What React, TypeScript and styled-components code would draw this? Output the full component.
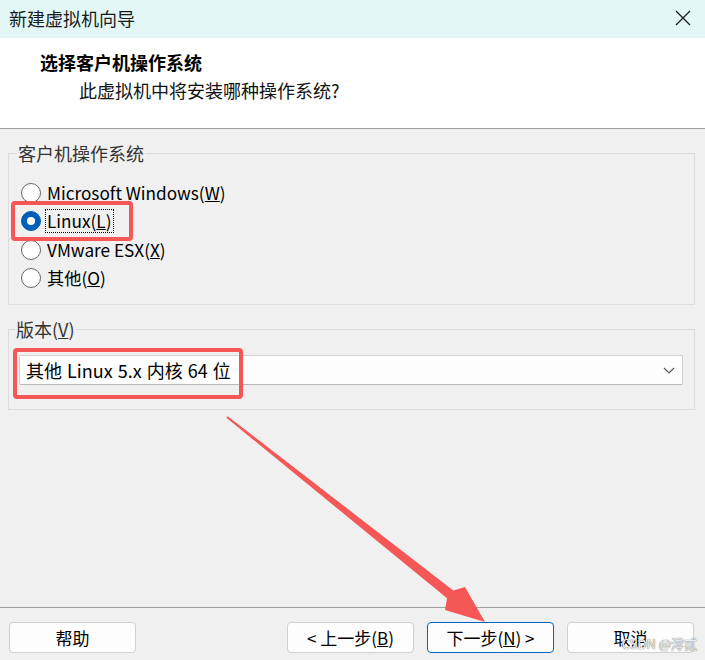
import React from 'react';
import styled, { createGlobalStyle } from 'styled-components';

const GlobalStyle = createGlobalStyle`
  html, body {
    margin: 0;
    padding: 0;
    background: #f0f0f0;
  }
  * {
    box-sizing: border-box;
  }
`;

const FONT = `"Noto Sans CJK SC", "Noto Sans", sans-serif`;
const RED = '#f55656';

interface OsOption {
  id: string;
  label: string;
  key: string;
  suffix: string;
}

const osOptions: OsOption[] = [
  { id: 'windows', label: 'Microsoft Windows(', key: 'W', suffix: ')' },
  { id: 'linux', label: 'Linux(', key: 'L', suffix: ')' },
  { id: 'esx', label: 'VMware ESX(', key: 'X', suffix: ')' },
  { id: 'other', label: '其他(', key: 'O', suffix: ')' },
];

const CloseIcon = () => (
  <svg width="16" height="16" viewBox="0 0 16 16">
    <path d="M1 1 L15 15 M15 1 L1 15" stroke="#1a1a1a" strokeWidth="1.3" fill="none" />
  </svg>
);

const Chevron = () => (
  <svg width="12" height="7" viewBox="0 0 12 7">
    <polyline points="1,1 6,6 11,1" stroke="#555" strokeWidth="1.1" fill="none" />
  </svg>
);

const App = () => {
  const selected = 'linux';

  return (
    <>
      <GlobalStyle />
      <Wizard>
        <TitleBar>
          <span>新建虚拟机向导</span>
          <CloseButton>
            <CloseIcon />
          </CloseButton>
        </TitleBar>

        <Header>
          <Heading>选择客户机操作系统</Heading>
          <SubHeading>此虚拟机中将安装哪种操作系统?</SubHeading>
        </Header>

        <Body>
          <Group>
            <Legend>客户机操作系统</Legend>
            <RadioList>
              {osOptions.map((opt) => (
                <RadioRow key={opt.id}>
                  <RadioDot checked={opt.id === selected} />
                  <RadioLabel focused={opt.id === selected}>
                    {opt.label}
                    <u>{opt.key}</u>
                    {opt.suffix}
                  </RadioLabel>
                </RadioRow>
              ))}
            </RadioList>
          </Group>

          <Group compact>
            <Legend>
              版本(<u>V</u>)
            </Legend>
            <Select>
              <span>其他 Linux 5.x 内核 64 位</span>
              <Chevron />
            </Select>
          </Group>
        </Body>

        <Footer>
          <Button>帮助</Button>
          <ButtonGroup>
            <Button>
              &lt; 上一步(<u>B</u>)
            </Button>
            <Button primary>
              下一步(<u>N</u>) &gt;
            </Button>
            <Button>取消</Button>
          </ButtonGroup>
        </Footer>

        <Highlight style={{ left: 11, top: 201, width: 122, height: 40 }} />
        <Highlight style={{ left: 13, top: 348, width: 230, height: 51 }} />

        <ArrowLayer width="705" height="660" viewBox="0 0 705 660">
          <polygon
            points="226.4,417.8 447.1,598.2 445,610 485,622 465,587 453.3,590.4 227.6,416.2"
            fill={RED}
          />
        </ArrowLayer>

        <Watermark>CSDN @澪贰</Watermark>
      </Wizard>
    </>
  );
};

export default App;

const Wizard = styled.div`
  position: relative;
  width: 705px;
  height: 660px;
  overflow: hidden;
  display: flex;
  flex-direction: column;
  background: #f0f0f0;
  font-family: ${FONT};
  font-size: 17px;
  color: #000;
`;

const TitleBar = styled.div`
  height: 38px;
  flex-shrink: 0;
  display: flex;
  align-items: center;
  justify-content: space-between;
  padding: 0 14px 3px 9px;
  background: #e4f7f7;
  font-size: 18px;
  color: #1a1a1a;
`;

const CloseButton = styled.div`
  display: flex;
  align-items: center;
`;

const Header = styled.div`
  height: 91px;
  flex-shrink: 0;
  background: #fff;
  border-bottom: 1px solid #a0a0a0;
  padding-top: 12px;
`;

const Heading = styled.div`
  padding-left: 40px;
  font-size: 18px;
  font-weight: 700;
  line-height: 24px;
  color: #000;
`;

const SubHeading = styled.div`
  margin-top: 4px;
  padding-left: 79px;
  font-size: 18px;
  line-height: 24px;
  color: #111;
`;

const Body = styled.div`
  flex: 1;
  display: flex;
  flex-direction: column;
  gap: 14px;
  padding: 14px 10px 0 8px;
`;

const Group = styled.fieldset<{ compact?: boolean }>`
  margin: 0;
  min-width: 0;
  border: 1px solid #dcdcdc;
  padding: ${(p) => (p.compact ? '16px 11px 24px 10px' : '16px 0 12px 12px')};
`;

const Legend = styled.legend`
  margin-left: -4px;
  padding: 0 1px;
  font-size: 18px;
  line-height: 20px;
  color: #333;
`;

const RadioList = styled.div`
  display: flex;
  flex-direction: column;
`;

const RadioRow = styled.div`
  height: 28.3px;
  display: flex;
  align-items: center;
  gap: 5px;
`;

const RadioDot = styled.span<{ checked?: boolean }>`
  width: 20px;
  height: 20px;
  flex-shrink: 0;
  border-radius: 50%;
  background: ${(p) => (p.checked ? '#005fb8' : '#fff')};
  border: 1px solid ${(p) => (p.checked ? '#005fb8' : '#666')};
  display: flex;
  align-items: center;
  justify-content: center;
  &::after {
    content: '';
    display: ${(p) => (p.checked ? 'block' : 'none')};
    width: 8px;
    height: 8px;
    border-radius: 50%;
    background: #fff;
  }
`;

const RadioLabel = styled.span<{ focused?: boolean }>`
  font-size: 17.2px;
  line-height: 22px;
  padding: 0 1px;
  outline: ${(p) => (p.focused ? '1px dotted #000' : 'none')};
  color: #000;
`;

const Select = styled.div`
  height: 30px;
  display: flex;
  align-items: center;
  justify-content: space-between;
  padding: 0 7px 0 6px;
  background: #fdfdfd;
  border: 1px solid #cfd2d4;
  border-bottom-color: #b8bbbd;
  border-radius: 2px;
  font-size: 18px;
  word-spacing: 1px;
  color: #000;
`;

const Footer = styled.div`
  height: 53px;
  flex-shrink: 0;
  border-top: 1px solid #a0a0a0;
  display: flex;
  justify-content: space-between;
  align-items: flex-start;
  padding: 14px 11px 0 9px;
`;

const ButtonGroup = styled.div`
  display: flex;
  gap: 13px;
`;

const Button = styled.button<{ primary?: boolean }>`
  width: 127px;
  height: 31px;
  padding: 0;
  border-radius: 4px;
  background: #fdfdfd;
  border: 1px solid ${(p) => (p.primary ? '#0067c0' : '#d0d0d0')};
  font-family: ${FONT};
  font-size: 17px;
  color: #000;
  display: flex;
  align-items: center;
  justify-content: center;
`;

const Highlight = styled.div`
  position: absolute;
  border: 4px solid ${RED};
  border-radius: 4px;
  pointer-events: none;
`;

const ArrowLayer = styled.svg`
  position: absolute;
  left: 0;
  top: 0;
  pointer-events: none;
`;

const Watermark = styled.div`
  position: absolute;
  right: 8px;
  bottom: 7px;
  font-family: ${FONT};
  font-size: 13px;
  color: rgba(255, 255, 255, 0.9);
  text-shadow: 0 0 1px #777, 0 0 1px #777;
  pointer-events: none;
`;
